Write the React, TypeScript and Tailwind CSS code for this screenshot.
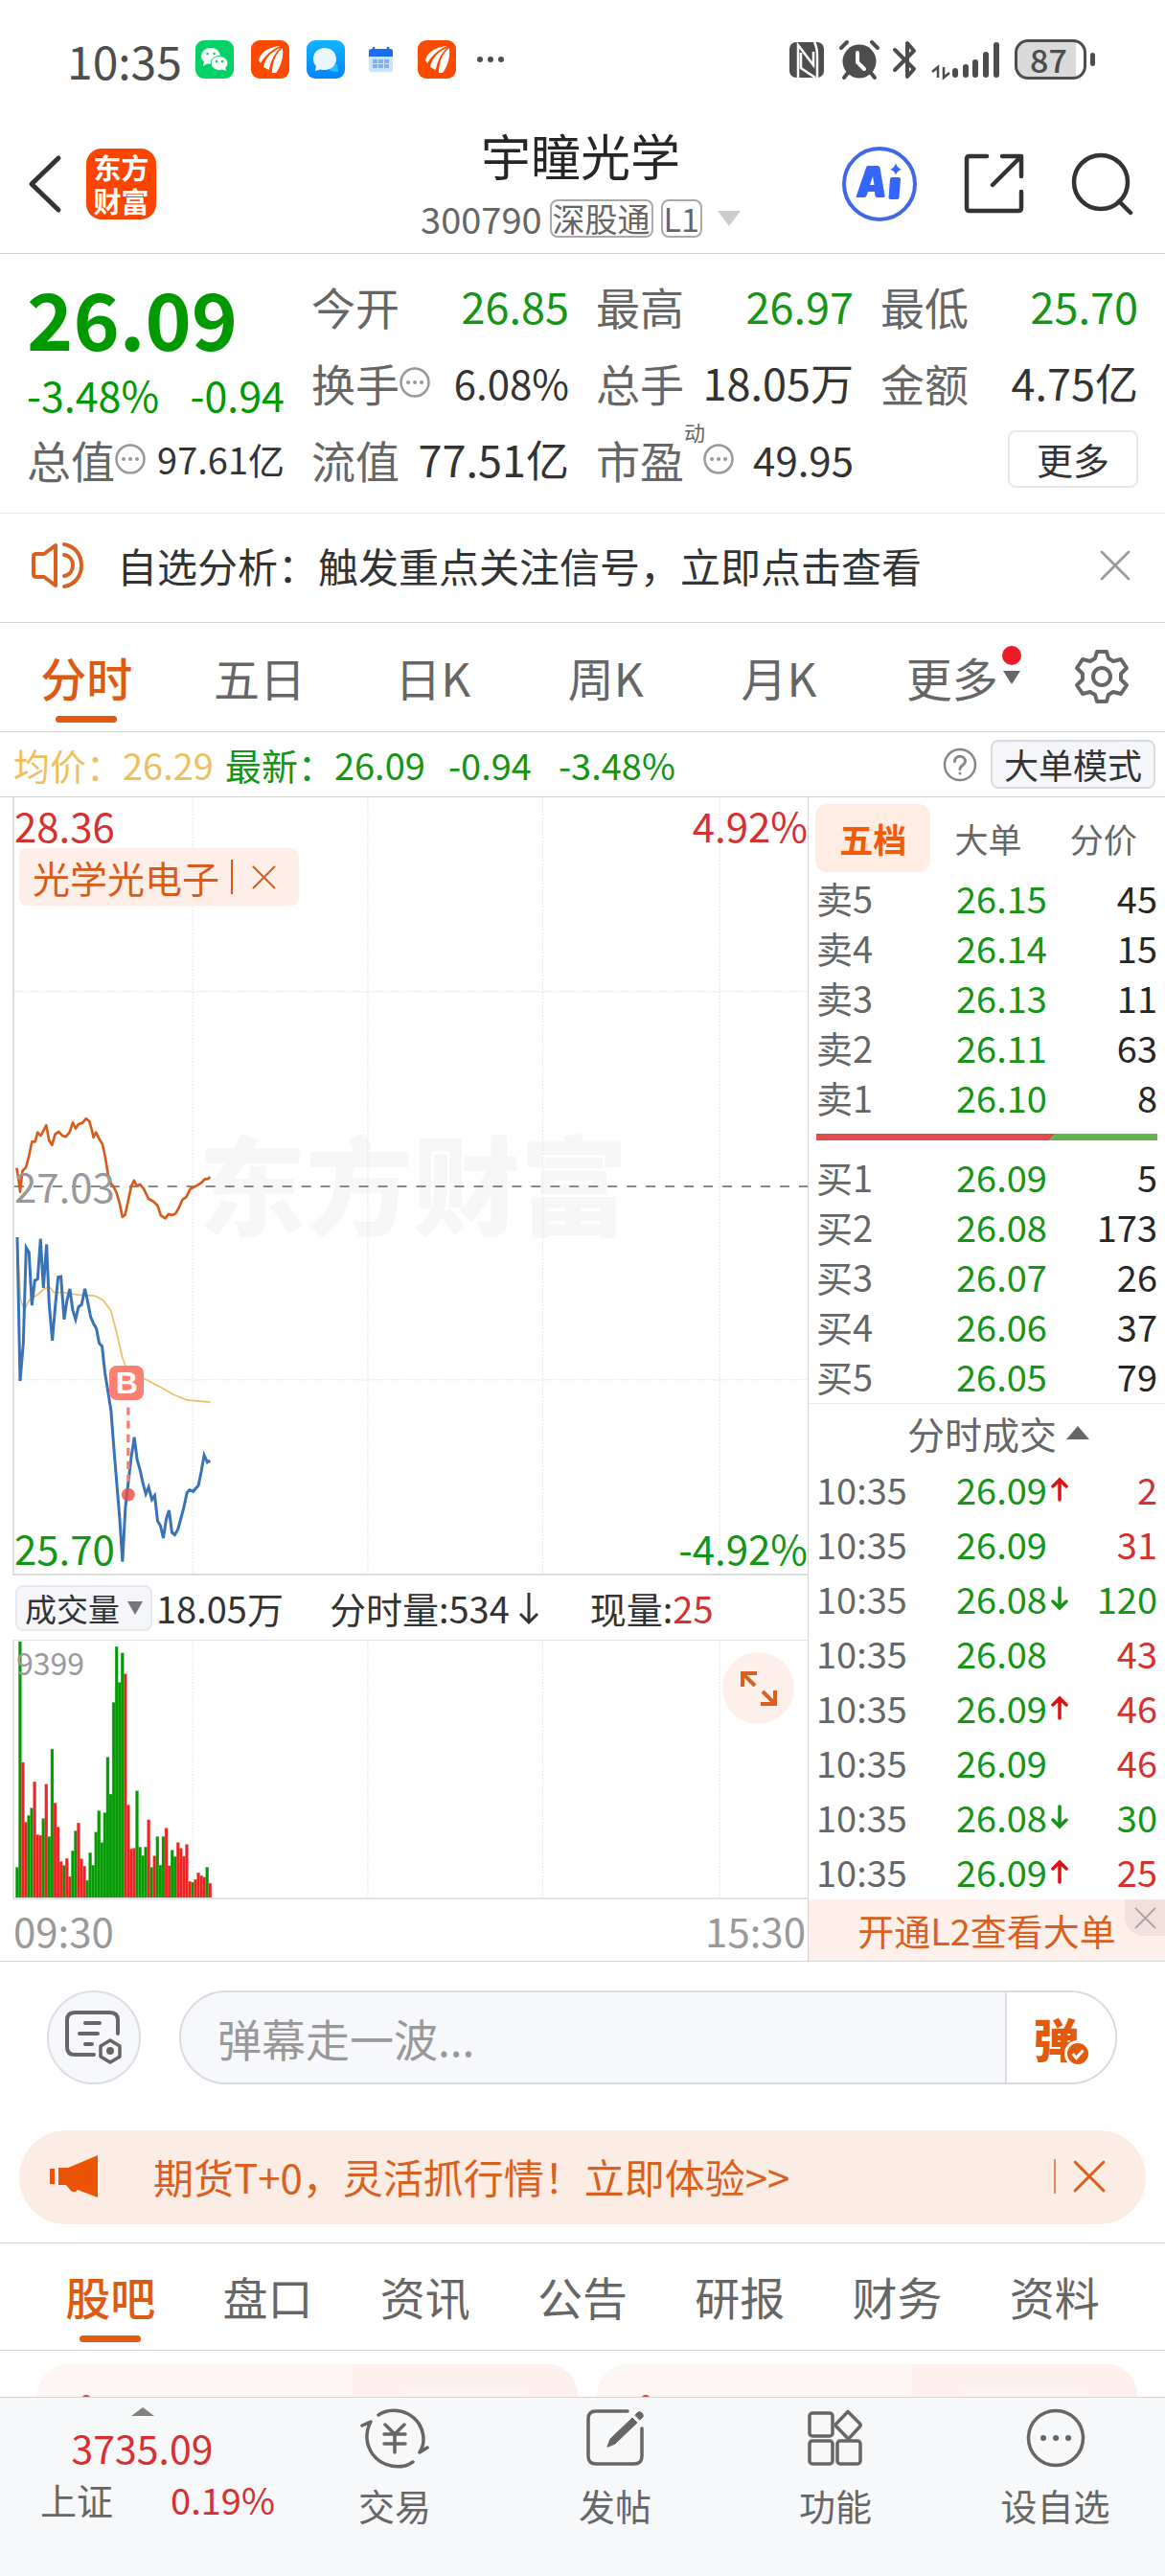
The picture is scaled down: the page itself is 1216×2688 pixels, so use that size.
import { useState } from "react";
import type { ReactNode } from "react";
import clsx from "clsx";

const chartTabs = ["分时", "五日", "日K", "周K", "月K"];
const infoTabs = ["股吧", "盘口", "资讯", "公告", "研报", "财务", "资料"];
const bookTabs = ["五档", "大单", "分价"];

const sells = [
  ["卖5", "26.15", "45"],
  ["卖4", "26.14", "15"],
  ["卖3", "26.13", "11"],
  ["卖2", "26.11", "63"],
  ["卖1", "26.10", "8"],
];

const buys = [
  ["买1", "26.09", "5"],
  ["买2", "26.08", "173"],
  ["买3", "26.07", "26"],
  ["买4", "26.06", "37"],
  ["买5", "26.05", "79"],
];

const deals = [
  { price: "26.09", move: "up", volume: "2", side: "buy" },
  { price: "26.09", move: "", volume: "31", side: "buy" },
  { price: "26.08", move: "down", volume: "120", side: "sell" },
  { price: "26.08", move: "", volume: "43", side: "buy" },
  { price: "26.09", move: "up", volume: "46", side: "buy" },
  { price: "26.09", move: "", volume: "46", side: "buy" },
  { price: "26.08", move: "down", volume: "30", side: "sell" },
  { price: "26.09", move: "up", volume: "25", side: "buy" },
];

// plot units: x 39..2526, y -868..1490
const sectorLine =
  "46,258 52,290 57,330 64,268 75,256 84,225 94,178 104,178 112,150 122,160 139,128 148,175 157,188 167,155 178,148 190,160 200,163 212,150 222,120 231,138 240,125 252,121 264,108 274,116 282,143 287,165 295,150 305,170 315,185 324,225 333,280 342,305 350,315 360,335 370,370 378,407 386,400 395,362 405,315 414,296 423,312 433,308 444,320 460,352 475,360 488,372 498,402 512,411 522,398 533,401 545,396 555,378 566,354 578,346 590,322 610,312 625,303 636,292 644,292 653,285";
const priceLine =
  "48,468 57,905 67,790 76,500 85,515 94,675 103,600 112,595 121,473 130,622 140,490 148,670 158,782 167,680 176,590 185,588 195,718 204,660 213,625 222,690 231,718 240,680 250,673 260,625 268,660 278,710 287,730 296,745 305,790 314,800 323,880 333,940 342,995 351,1110 360,1215 369,1320 378,1454 387,1290 396,1215 405,1140 415,1076 424,1145 433,1175 442,1215 451,1248 460,1227 470,1265 479,1253 488,1330 497,1345 506,1382 515,1325 524,1298 533,1365 542,1372 552,1355 570,1290 580,1245 588,1236 600,1240 616,1222 625,1180 634,1130 644,1152 653,1147";
const avgLine =
  "48,468 58,655 70,690 85,660 100,650 115,640 130,627 148,618 162,635 200,637 240,643 290,646 318,660 342,692 360,760 378,835 390,865 420,885 460,905 500,925 540,947 580,963 653,969";

// g = falling minute, r = rising minute, number = top of the bar
const volumes =
  "g748 g36 r417 r605 g585 g561 r478 r645 r647 g594 r486 g651 g375 r545 r621 r730 g742 r720 r777 g696 g633 r608 r721 r744 g789 g702 g741 g637 g570 g670 g576 g401 g517 g228 g52 g165 g72 r138 r551 r690 r688 g507 g684 g711 g684 r598 g748 r712 g651 g741 g651 r624 r743 g694 g714 r670 r688 r713 r676 r792 g795 r786 r765 r774 r779 g748 r798"
    .split(" ")
    .map((v) => ({ up: v[0] === "r", top: Number(v.slice(1)) }));

const Close = ({ className }: { className: string }) => (
  <svg viewBox="0 0 24 24" className={className} fill="none" stroke="currentColor" strokeWidth="2" strokeLinecap="round" aria-hidden="true">
    <path d="M1.500 1.500 22.500 22.500M22.500 1.500 1.500 22.500" />
  </svg>
);

const MoreDots = () => (
  <svg viewBox="0 0 32 32" className="size-8 shrink-0 text-[#999999]" fill="none" stroke="currentColor" strokeWidth="2.500" aria-hidden="true">
    <circle cx="16" cy="16" r="14.500" />
    <path d="M9 16h.1M16 16h.1M23 16h.1" strokeWidth="4" strokeLinecap="round" />
  </svg>
);

const EastMoney = () => (
  <svg viewBox="0 0 40 40" className="size-10" aria-hidden="true">
    <rect width="40" height="40" rx="9" fill="#fd4a02" />
    <path d="M8 21C10 12 19 7 31 6 24 9 16 14 10 24z" fill="#fff" />
    <path d="M13 28C15 18 22 11 32 7c-6 6-10 13-13 24z" fill="#fff" />
    <path d="M22 34C22 23 26 13 33 8c1 8-1 18-7 26z" fill="#fff" />
    <path d="M10 26C15 16 22 10 32 6.500M19 33C21 21 26 12 33 7" stroke="#fd4a02" strokeWidth="1.500" fill="none" />
  </svg>
);

const StatusBar = () => (
  <div className="flex items-center justify-between pt-8 pl-[70px] pr-[73px] text-[#4d4d4d]">
    <div className="flex items-center gap-[18px]">
      <span className="-mr-1 text-5xl leading-[60px]">10:35</span>
      <svg viewBox="0 0 40 40" className="size-10" aria-hidden="true">
        <rect width="40" height="40" rx="9" fill="#04d266" />
        <ellipse cx="16" cy="16.500" rx="10" ry="8.500" fill="#fff" />
        <path d="M9 22l-1 5 5-3z" fill="#fff" />
        <ellipse cx="25" cy="24" rx="9" ry="7.500" fill="#fff" stroke="#04d266" strokeWidth="1" />
        <path d="M31 28l1 4-5-2z" fill="#fff" />
        <path d="M12.500 14h.1M19.500 14h.1M22 22h.1M28 22h.1" stroke="#04d266" strokeWidth="2.500" strokeLinecap="round" />
      </svg>
      <EastMoney />
      <svg viewBox="0 0 40 40" className="size-10" aria-hidden="true">
        <defs>
          <linearGradient id="msg" x1="0" y1="0" x2="0" y2="1">
            <stop offset="0" stopColor="#13b4ff" />
            <stop offset="1" stopColor="#0284fe" />
          </linearGradient>
        </defs>
        <rect width="40" height="40" rx="9" fill="url(#msg)" />
        <path d="M22 27l10-2 1 8-8-1z" fill="#25c1fd" />
        <path d="M19 8c7 0 12 5 12 11.500S26 31 19 31c-2 0-3 0-4.500-.5L9 32l1-5c-2-2-3-4.500-3-7.500C7 13 12 8 19 8z" fill="#eaf6ff" />
      </svg>
      <svg viewBox="0 0 40 40" className="size-10" aria-hidden="true">
        <rect x="7" y="9" width="25" height="24" rx="2" fill="#cbe3fd" />
        <path d="M7 17v-5q0-3 3-3h19q3 0 3 3v5z" fill="#1b6cf5" />
        <path d="M12 7v4M27 7v4" stroke="#1b6cf5" strokeWidth="2.500" />
        <path d="M11 20h5v4h-5zM17 20h5v4h-5zM23 20h5v4h-5zM11 25h5v4h-5zM17 25h5v4h-5zM23 25h5v4h-5z" fill="#7fb2f2" />
      </svg>
      <EastMoney />
      <svg viewBox="0 0 32 8" className="ml-0.5 w-8" fill="currentColor" aria-hidden="true">
        <circle cx="5" cy="4" r="3" />
        <circle cx="16" cy="4" r="3" />
        <circle cx="27" cy="4" r="3" />
      </svg>
    </div>
    <div className="flex items-center">
      <svg viewBox="0 0 232 44" className="h-11 w-[232px]" fill="none" stroke="currentColor" aria-hidden="true">
        <rect x="1" y="4" width="36" height="37" rx="7" fill="currentColor" stroke="none" />
        <path d="M10 41V7l16 21V14M13 15v16l15 10M27 4q3 5 3 15v22" stroke="#fff" strokeWidth="2.500" />
        <circle cx="74" cy="24" r="17.500" fill="currentColor" stroke="none" />
        <path d="M72 15v10l7 7" stroke="#fff" strokeWidth="4" strokeLinecap="round" />
        <path d="M55 10l6-6M93 10l-6-6M58 41l4-5M90 41l-4-5" strokeWidth="4" strokeLinecap="round" />
        <path d="M111 12l20 20-7 8V5l7 8-20 20" strokeWidth="4" strokeLinejoin="round" strokeLinecap="round" />
        <path d="M156 41V30l-6 5M162 30v11l6-5" strokeWidth="2.500" />
        <path d="M174 38v-4M185 38v-8M195 38V25M206 38V17M217 38V7" strokeWidth="6" strokeLinecap="round" />
      </svg>
      <span className="ml-1 w-[75px] rounded-[14px] border-3 border-current bg-linear-to-r from-[#dadada] from-88% to-white to-88% pr-1 text-center text-[34px] leading-9 font-medium">87</span>
      <span className="ml-1 h-3.5 w-[5px] rounded-full bg-current" />
    </div>
  </div>
);

const Header = () => (
  <header className="grid grid-cols-[1fr_auto_1fr] items-center border-b border-[#d4d5d6] pt-[34px] pb-1.5 pl-7 pr-8 text-[#333333]">
    <div className="flex items-center gap-6">
      <button type="button" aria-label="返回">
        <svg viewBox="0 0 38 62" className="h-[62px] w-[38px]" fill="none" stroke="currentColor" strokeWidth="5" strokeLinecap="round" strokeLinejoin="round">
          <path d="M33 4 5 31l28 27" />
        </svg>
      </button>
      <a href="#home" className="w-[73px] rounded-2xl bg-[#fd4503] px-1.5 py-0.5 text-center text-[29px] leading-[35px] font-bold text-white">
        东方财富
      </a>
    </div>
    <div className="flex flex-col items-center">
      <h1 className="text-[52px] leading-[72px] text-[#262626]">宇瞳光学</h1>
      <button type="button" className="flex items-center gap-2 text-[38px] leading-[60px] text-[#666666]">
        300790
        <span className="rounded-lg border-2 border-[#aaaaaa] px-px text-[34px] leading-9">深股通</span>
        <span className="rounded-lg border-2 border-[#aaaaaa] px-px text-[34px] leading-9">L1</span>
        <svg viewBox="0 0 24 16" className="ml-2 w-6" fill="#cccccc" aria-hidden="true">
          <path d="M0 0h24L12 16z" />
        </svg>
      </button>
    </div>
    <div className="flex items-center justify-end gap-12">
      <button type="button" aria-label="AI">
        <svg viewBox="0 0 80 80" className="size-20" fill="none" aria-hidden="true">
          <circle cx="40" cy="40" r="37" stroke="#4068e8" strokeWidth="4" />
          <path fillRule="evenodd" d="M28 21h10q2 0 2.500 2l5 29q.5 2-2 2h-6q-2 0-2-2l-.5-4h-7l-1.500 4q-.5 2-2.500 2h-7q-2 0-1-2l10-29q.5-2 2-2zM33 32l-3 9h4.500z" fill="#3565fc" />
          <path d="M53 33h7q2 0 2 2l-1.500 19q0 2-2 2h-7q-2 0-2-2L51 35q0-2 2-2z" fill="#3565fc" />
          <path d="M57 18q1 5 6 7-5 1-6 6-1-5-6-6 5-2 6-7z" fill="#3565fc" />
        </svg>
      </button>
      <button type="button" aria-label="分享">
        <svg viewBox="0 0 64 64" className="size-16" fill="none" stroke="currentColor" strokeWidth="4.500" strokeLinecap="round" strokeLinejoin="round">
          <path d="M24 3H6Q3 3 3 6v51q0 3 3 3h51q3 0 3-3V40M40 3h20v21M59 4 30 33" />
        </svg>
      </button>
      <button type="button" aria-label="搜索">
        <svg viewBox="0 0 66 66" className="size-[66px]" fill="none" stroke="currentColor" strokeWidth="4.500" strokeLinecap="round">
          <circle cx="31" cy="31" r="28" />
          <path d="m50 51 12 12" />
        </svg>
      </button>
    </div>
  </header>
);

const Stat = ({ label, value, green, dots, sup }: { label: string; value: string; green?: boolean; dots?: boolean; sup?: string }) => (
  <div className="flex items-center justify-between whitespace-nowrap">
    <dt className="flex items-center text-[46px] leading-20 text-[#666666]">
      {label}
      {sup && <sup className="-mr-0.5 self-start text-[22px] leading-[44px]">{sup}</sup>}
      {dots && <MoreDots />}
    </dt>
    <dd className={clsx("leading-20", dots ? "text-[42px]" : "text-[45px]", green ? "text-[#159515]" : "text-[#333333]")}>{value}</dd>
  </div>
);

const Quote = () => (
  <section className="border-b border-[#ebebeb] pt-3.5 pb-4">
    <dl className="grid grid-cols-4 gap-x-7 px-7">
      <div className="row-span-2 text-[#009a00]">
        <dt className="text-[82px] leading-[104px] font-bold">26.09</dt>
        <dd className="flex justify-between text-[43px] leading-14">
          <span>-3.48%</span>
          <span>-0.94</span>
        </dd>
      </div>
      <Stat label="今开" value="26.85" green />
      <Stat label="最高" value="26.97" green />
      <Stat label="最低" value="25.70" green />
      <Stat label="换手" value="6.08%" dots />
      <Stat label="总手" value="18.05万" />
      <Stat label="金额" value="4.75亿" />
      <div className="flex items-center justify-between whitespace-nowrap">
        <dt className="flex items-center text-[46px] leading-20 text-[#666666]">
          总值
          <MoreDots />
        </dt>
        <dd className="text-[38px] leading-20 text-[#333333]">97.61亿</dd>
      </div>
      <Stat label="流值" value="77.51亿" />
      <Stat label="市盈" value="49.95" sup="动" dots />
      <div className="flex items-center justify-end">
        <button type="button" className="rounded-lg border-2 border-[#e8e8e8] px-7 text-[38px] leading-14 text-[#333333]">更多</button>
      </div>
    </dl>
  </section>
);

const Notice = () => (
  <div className="flex items-center border-b border-[#d4d5d6] pt-[26px] pb-[31px] pr-9 pl-8 text-[42px] leading-14 text-[#333333]">
    <svg viewBox="0 0 56 50" className="mr-[34px] h-[50px] w-14 text-[#d9601f]" fill="none" stroke="currentColor" strokeWidth="4" strokeLinejoin="round" strokeLinecap="round" aria-hidden="true">
      <path d="M26 4v42L14 37H6q-3 0-3-3V16q0-3 3-3h8zM35 3c24 4 24 40 0 44M35 14c12 2 12 20 0 22" />
    </svg>
    <p className="flex-1">自选分析：触发重点关注信号，立即点击查看</p>
    <button type="button" aria-label="关闭" className="text-[#999999]">
      <Close className="size-8" />
    </button>
  </div>
);

const ChartTabs = () => {
  const [active, setActive] = useState("分时");

  return (
    <nav className="flex items-start border-b border-[#d4d5d6] pt-6 text-5xl text-[#666666]">
      {chartTabs.map((tab) => (
        <button
          key={tab}
          type="button"
          onClick={() => setActive(tab)}
          className={clsx("flex flex-1 flex-col items-center pb-[9px]", active === tab && "font-medium text-[#dd5a11]")}>
          <span className="leading-16">{tab}</span>
          <span className={clsx("mt-[9px] h-[7px] w-16 rounded-full", active === tab && "bg-[#e35a0d]")} />
        </button>
      ))}
      <button type="button" className="relative flex-1 leading-16">
        更多
        <svg viewBox="0 0 20 15" className="absolute top-[26px] right-[18px] w-5" fill="#666666" aria-hidden="true">
          <path d="M1 0h18L10 14z" />
        </svg>
        <span className="absolute top-0 right-[18px] size-5 rounded-full bg-[#ed1c24]" />
      </button>
      <button type="button" aria-label="设置" className="flex h-16 w-[132px] items-center justify-center">
        <svg viewBox="0 0 58 58" className="size-[58px]" fill="none" stroke="currentColor" strokeWidth="4" strokeLinejoin="round">
          <path d="M24 3h10l2 7 5 3 8-2 6 9-6 6v6l6 6-6 9-8-2-5 3-2 7H24l-2-7-5-3-8 2-6-9 6-6v-6l-6-6 6-9 8 2 5-3z" />
          <circle cx="29" cy="29" r="9" />
        </svg>
      </button>
    </nav>
  );
};

const PriceChart = () => (
  <div className="relative ml-[13px] border-b-2 border-l-2 border-[#dcdcdc] text-[42px] leading-[50px]">
    <p className="absolute top-[342px] left-[192px] text-[112px] leading-[116px] font-black text-[#f7f7f7]">东方财富</p>
    <svg viewBox="39 -868 2487 2358" preserveAspectRatio="none" className="relative block h-[810px] w-full" fill="none" role="img" aria-label="分时走势">
      <g stroke="#e4e4e4" strokeWidth="3">
        <path d="M598-868v2358M1147-868v2358M1696-868v2358M2250-868v2358" strokeDasharray="6 4" />
        <path d="M39-278h2487M39 901h2487" strokeDasharray="6 4" />
      </g>
      <path d="M39 314h2487" stroke="#888888" strokeWidth="6" strokeDasharray="30 30" />
      <polyline points={avgLine} stroke="#edbf63" strokeWidth="5" />
      <polyline points={priceLine} stroke="#3a73b5" strokeWidth="9" />
      <polyline points={sectorLine} stroke="#d85c19" strokeWidth="8" strokeLinejoin="round" />
      <path d="M396 985v225" stroke="#e8857b" strokeWidth="10" strokeDasharray="24 17" />
      <ellipse cx="396" cy="1250" rx="21" ry="20" fill="#ee4a3e" fillOpacity="0.8" />
    </svg>
    <span className="absolute top-[593px] left-[12%] size-9 rounded-lg bg-[#fb8072] text-center font-[Liberation_Sans] text-[32px] leading-9 font-bold text-white">B</span>
    <span className="absolute top-1 left-0 text-[#d63030]">28.36</span>
    <span className="absolute top-1 right-0 text-[#d63030]">4.92%</span>
    <span className="absolute top-[380px] left-0 text-[#999999]">27.03</span>
    <span className="absolute bottom-0.5 left-0 text-[#159515]">25.70</span>
    <span className="absolute right-0 bottom-0.5 text-[#159515]">-4.92%</span>
    <div className="absolute top-[53px] left-[5px] flex items-center rounded-lg bg-[#fdede5]/90 px-3.5 text-[39px] leading-[60px] text-[#d85c19]">
      光学光电子
      <span className="mr-2.5 ml-3 h-9 w-0.5 bg-[#d85c19]" />
      <button type="button" aria-label="移除板块" className="mx-2.5">
        <Close className="size-[25px]" />
      </button>
    </div>
  </div>
);

const VolumeChart = () => (
  <>
    <div className="flex items-center py-2 pl-4 text-[38px] leading-[51px] whitespace-nowrap text-[#333333]">
      <button type="button" className="mr-1 flex items-center gap-2 rounded-lg border-2 border-[#e6e8ec] bg-[#f5f6fa] px-2 text-[33px] leading-11">
        成交量
        <svg viewBox="0 0 16 14" className="w-4" fill="#777777" aria-hidden="true">
          <path d="M0 0h16L8 14z" />
        </svg>
      </button>
      <span className="mr-12">18.05万</span>
      <span className="flex items-center">
        分时量:534
        <svg viewBox="0 0 24 36" className="mr-[52px] ml-2 h-9" fill="none" stroke="currentColor" strokeWidth="3" aria-hidden="true">
          <path d="M12 2v31M3 24l9 9 9-9" />
        </svg>
      </span>
      <span>
        现量:<span className="text-[#d63030]">25</span>
      </span>
    </div>
    <div className="relative ml-[13px] border-t border-b-2 border-l-2 border-[#e2e2e2]">
      <svg viewBox="39 33 2487 810" preserveAspectRatio="none" className="block h-[268px] w-full" role="img" aria-label="成交量">
        <path d="M598 33v810M1147 33v810M1696 33v810M2250 33v810" stroke="#e4e4e4" strokeWidth="3" strokeDasharray="6 4" />
        {volumes.map((v, i) => (
          <rect key={i} x={43 + i * 9.17} y={v.top} width="9" height={843 - v.top} fill={v.up ? "#ee2222" : "#049a04"} stroke={v.up ? "#f26060" : "#3db43d"} />
        ))}
      </svg>
      <span className="absolute top-0.5 left-0.5 text-[32px] leading-10 text-[#999999]">9399</span>
      <button type="button" aria-label="全屏" className="absolute top-3 right-[14px] flex size-[75px] items-center justify-center rounded-full bg-[#fdf0ea]">
        <svg viewBox="0 0 38 38" className="size-[38px]" fill="none" stroke="#d9601f" strokeWidth="4" aria-hidden="true">
          <path d="M2 17V3h15M3 4l12 12M36 21v14H21M35 34 23 22" />
        </svg>
      </button>
    </div>
    <div className="flex justify-between pr-0.5 pl-3.5 text-[42px] leading-16 text-[#999999]">
      <span>09:30</span>
      <span>15:30</span>
    </div>
  </>
);

const BookRows = ({ rows }: { rows: string[][] }) => (
  <table className="w-full">
    <tbody>
      {rows.map(([label, price, volume]) => (
        <tr key={label}>
          <th scope="row" className="w-[146px] p-0 text-left font-normal text-[#666666]">{label}</th>
          <td className="p-0 text-[#159515]">{price}</td>
          <td className="p-0 text-right text-[#262626]">{volume}</td>
        </tr>
      ))}
    </tbody>
  </table>
);

const Arrow = ({ down }: { down?: boolean }) => (
  <svg viewBox="0 0 18 26" className="ml-1 h-[26px] w-[18px]" fill="none" stroke={down ? "#159515" : "#dd1111"} strokeWidth="3.500" strokeLinecap="round" aria-hidden="true">
    <path d={down ? "M9 2v21M2 16l7 7 7-7" : "M9 24V3M2 10l7-7 7 7"} />
  </svg>
);

const OrderBook = () => {
  const [active, setActive] = useState("五档");

  return (
    <aside className="flex flex-col border-l border-[#d4d5d6]">
      <div className="mb-px grid grid-cols-3 pt-[7px] pr-1 pl-[7px] text-[35px] leading-[71px] text-[#666666]">
        {bookTabs.map((tab) => (
          <button
            key={tab}
            type="button"
            onClick={() => setActive(tab)}
            className={clsx("rounded-xl", active === tab && "bg-[#ffede4] font-bold text-[#f25a0a]")}>
            {tab}
          </button>
        ))}
      </div>
      <div className="pr-2 pl-2 text-[38px] leading-[52px]">
        <BookRows rows={sells} />
        <svg viewBox="0 0 359 7" preserveAspectRatio="none" className="mt-3 mb-3 block h-[7px] w-full" aria-hidden="true">
          <path d="M0 0h252l-7 7H0z" fill="#e04c4c" />
          <path d="M252 0h107v7H245z" fill="#61b54c" />
        </svg>
        <BookRows rows={buys} />
      </div>
      <button type="button" className="mt-0.5 flex items-center justify-center gap-2.5 border-t border-[#ebebeb] pl-6 text-[39px] leading-[60px] text-[#666666]">
        分时成交
        <svg viewBox="0 0 24 14" className="w-6" fill="#666666" aria-hidden="true">
          <path d="M0 14h24L12 0z" />
        </svg>
      </button>
      <table className="mr-2 mb-px ml-2 text-[38px] leading-[57px]">
        <tbody>
          {deals.map((deal, i) => (
            <tr key={i}>
              <td className="w-[146px] p-0 text-[#666666]">10:35</td>
              <td className="p-0 text-[#159515]">
                <span className="flex items-center">
                  {deal.price}
                  {deal.move && <Arrow down={deal.move === "down"} />}
                </span>
              </td>
              <td className={clsx("p-0 text-right", deal.side === "buy" ? "text-[#d63030]" : "text-[#159515]")}>{deal.volume}</td>
            </tr>
          ))}
        </tbody>
      </table>
      <div className="relative bg-[#fdf0ea] text-center text-[38px] leading-16 text-[#d9601f]">
        <a href="#level2">开通L2查看大单</a>
        <button type="button" aria-label="关闭" className="absolute top-0 right-0 flex h-[38px] w-[42px] items-center justify-center rounded-bl-[20px] bg-[#efe2dd] text-[#aaa3a0]">
          <Close className="size-[23px]" />
        </button>
      </div>
    </aside>
  );
};

const Market = () => (
  <section>
    <div className="flex items-center border-b border-[#d4d5d6] py-2 pr-2.5 pl-3.5 text-[38px] leading-[51px] whitespace-nowrap text-[#159515]">
      <span className="mr-3 text-[#edbf63]">均价：26.29</span>
      <span className="mr-6">最新：26.09</span>
      <span className="mr-7">-0.94</span>
      <span className="flex-1">-3.48%</span>
      <button type="button" aria-label="说明" className="mr-3.5">
        <svg viewBox="0 0 36 36" className="size-9" fill="none" stroke="#888888" strokeWidth="2.500" strokeLinecap="round">
          <circle cx="18" cy="18" r="16" />
          <path d="M12.500 14.500c0-7 11-7 11 0 0 4-5.500 4-5.500 8M18 27v.1" strokeWidth="3" />
        </svg>
      </button>
      <button type="button" className="rounded-lg border-2 border-[#d9dbe0] bg-[#f5f6fa] px-3 text-[36px] leading-[47px] text-[#333333]">大单模式</button>
    </div>
    <div className="grid grid-cols-[843fr_373fr] border-b border-[#d4d5d6]">
      <div className="min-w-0">
        <PriceChart />
        <VolumeChart />
      </div>
      <OrderBook />
    </div>
  </section>
);

const Danmu = () => (
  <form className="flex pt-[30px] pr-[50px] pb-12 pl-[49px]">
    <button type="button" aria-label="弹幕设置" className="mr-10 flex size-[98px] items-center justify-center rounded-full border-2 border-[#dcdee2] bg-[#f7f8fb]">
      <svg viewBox="0 0 60 56" className="h-14 w-[60px]" fill="none" stroke="#666666" strokeWidth="4" strokeLinecap="round" strokeLinejoin="round" aria-hidden="true">
        <path d="M55 24V10q0-8-8-8H10Q2 2 2 10v28q0 8 8 8h20M21 13h15M15 24h19M21 35h7" />
        <path d="m47 31 10 6v11l-10 6-10-6V37z" strokeWidth="3.500" />
        <circle cx="47" cy="42" r="2" fill="#666666" />
      </svg>
    </button>
    <div className="flex flex-1 overflow-hidden rounded-full border-2 border-[#d8dade] bg-[#f7f8fb]">
      <input type="text" aria-label="弹幕" placeholder="弹幕走一波..." className="min-w-0 flex-1 px-[38px] text-[46px] placeholder:text-[#999999]" />
      <button type="submit" className="relative w-[115px] border-l-2 border-[#dcdee2] bg-white pr-2.5 text-[48px] leading-[60px] font-black text-[#e35a0d]">
        弹
        <svg viewBox="0 0 28 28" className="absolute right-[25px] bottom-4 w-7" fill="none" stroke="#fff" aria-hidden="true">
          <circle cx="14" cy="14" r="12.500" fill="#e35a0d" strokeWidth="3" />
          <path d="m8.500 14 4 4.500 7-8" strokeWidth="3" />
        </svg>
      </button>
    </div>
  </form>
);

const Promo = () => (
  <div className="mx-5 flex items-center rounded-full bg-[#fcede4] px-8 pt-[19px] pb-[21px] text-[42px] leading-[58px] text-[#d9601f]">
    <svg viewBox="0 0 52 44" className="mr-14 h-11 w-[52px]" fill="#ea5404" aria-hidden="true">
      <path d="M0 14h5v16H0zM9 13h10L50 0v44l-21-8q-3 4-7 1l-5-6H9z" />
    </svg>
    <a href="#futures" className="flex-1">期货T+0，灵活抓行情！立即体验&gt;&gt;</a>
    <span className="mr-[18px] h-9 w-0.5 bg-[#dc8a5c]" />
    <button type="button" aria-label="关闭" className="mr-2.5">
      <Close className="size-[34px]" />
    </button>
  </div>
);

const InfoTabs = () => {
  const [active, setActive] = useState("股吧");

  return (
    <nav className="mt-[19px] flex border-y border-[#d4d5d6] px-[33px] pt-[23px] pb-2 text-[47px] text-[#666666]">
      {infoTabs.map((tab) => (
        <button
          key={tab}
          type="button"
          onClick={() => setActive(tab)}
          className={clsx("flex flex-1 flex-col items-center", active === tab && "font-medium text-[#dd5a11]")}>
          <span className="leading-16">{tab}</span>
          <span className={clsx("mt-[9px] h-[7px] w-16 rounded-full", active === tab && "bg-[#e35a0d]")} />
        </button>
      ))}
    </nav>
  );
};

const Cards = () => (
  <div className="grid grid-cols-2 gap-5 pt-3.5 pr-[29px] pl-[39px]">
    {["long", "short"].map((id) => (
      <div key={id} className="relative flex h-[34px] justify-end overflow-hidden rounded-t-[32px] bg-[#fef6f4]">
        <div className="flex w-5/12 items-end justify-center bg-[#fdf0ed]">
          <span className="h-2.5 w-32 bg-[#fef4f2]" />
        </div>
        <span className="absolute -bottom-2 left-[46px] size-2.5 rounded-full bg-[#d0484a]" />
      </div>
    ))}
  </div>
);

const NavItem = ({ label, children }: { label: string; children: ReactNode }) => (
  <a href="#nav" className="flex flex-col items-center pt-2.5">
    <svg viewBox="0 0 72 64" className="mb-3 h-16 w-[72px]" fill="none" stroke="#666666" strokeWidth="3.500" strokeLinecap="round" strokeLinejoin="round" aria-hidden="true">
      {children}
    </svg>
    {label}
  </a>
);

const BottomNav = () => (
  <nav className="grid grid-cols-[297fr_230fr_230fr_230fr_229fr] border-t border-[#d4d5d6] bg-[#f7f8fa] pb-12 text-[38px] leading-[52px] text-[#666666]">
    <a href="#index" className="flex flex-col items-center pt-2.5 text-[#d63030]">
      <svg viewBox="0 0 24 9" className="w-6" fill="#808080" aria-hidden="true">
        <path d="M0 9h24L12 0z" />
      </svg>
      <span className="mt-1.5 text-[41px] leading-[52px]">3735.09</span>
      <span className="flex gap-[60px] pl-8 leading-[58px]">
        <span className="text-[#666666]">上证</span>
        <span>0.19%</span>
      </span>
    </a>
    <NavItem label="交易">
      <path d="M19 8C38-4 66 8 66 34c0 4-1 8-4 13l8-5M2 19l9-4c-13 24 7 52 36 46 3-1 5-2 8-4" />
      <path d="m26 18 10 10 10-10M36 28v19M25 28h22M25 38h22" />
    </NavItem>
    <NavItem label="发帖">
      <path d="M49 4H16Q8 4 8 12v39q0 8 8 8h40q8 0 8-8V22" />
      <path d="M28 41l3-8 23-22 5 5-23 22zM57 8l3-3q2-1 4 1t1 4l-3 3z" fill="#666666" strokeWidth="1" />
    </NavItem>
    <NavItem label="功能">
      <rect x="9" y="6" width="24" height="24" rx="3" />
      <rect x="9" y="35" width="24" height="24" rx="3" />
      <rect x="38" y="35" width="24" height="24" rx="3" />
      <path d="M49 4.500 61.500 17q1.500 1.500 0 3L51 31.500q-1.500 1.500-3 0L37 20q-1.500-1.500 0-3z" />
    </NavItem>
    <NavItem label="设自选">
      <circle cx="36" cy="32" r="28.500" />
      <path d="M23 32h.1M36 32h.1M49 32h.1" strokeWidth="6" />
    </NavItem>
  </nav>
);

const App = () => {
  return (
    <main className="w-full overflow-hidden bg-white font-['Noto_Sans_CJK_SC','Noto_Sans',sans-serif]">
      <StatusBar />
      <Header />
      <Quote />
      <Notice />
      <ChartTabs />
      <Market />
      <Danmu />
      <Promo />
      <InfoTabs />
      <Cards />
      <BottomNav />
    </main>
  );
};

export default App;
